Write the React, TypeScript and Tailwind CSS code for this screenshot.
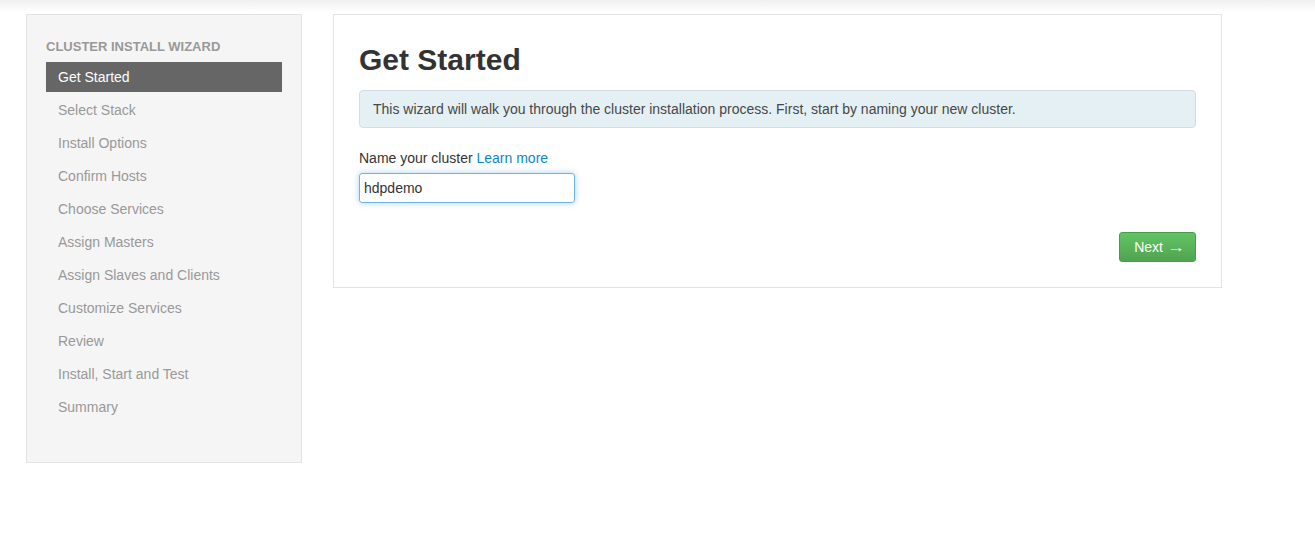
import React from "react";

const steps = [
  "Get Started",
  "Select Stack",
  "Install Options",
  "Confirm Hosts",
  "Choose Services",
  "Assign Masters",
  "Assign Slaves and Clients",
  "Customize Services",
  "Review",
  "Install, Start and Test",
  "Summary",
];

export default function App() {
  return (
    <div
      className="min-h-[545px] w-full bg-[linear-gradient(to_bottom,#f0f0f0_0px,#ffffff_12px)] pl-[26px] pt-[14px] text-[14px] text-[#333]"
      style={{ fontFamily: '"Liberation Sans", Arial, Helvetica, sans-serif' }}
    >
      <div className="flex items-start gap-[31px]">
        <div className="w-[276px] h-[449px] shrink-0 border border-[#e3e3e3] bg-[#f5f5f5] px-[19px] pt-[22px]">
          <div className="text-[13px] leading-[20px] font-bold uppercase text-[#999]">Cluster Install Wizard</div>
          <ul className="mt-[5px] flex flex-col gap-[3px]">
            {steps.map((s, i) => (
              <li
                key={s}
                className={
                  i === 0
                    ? "h-[30px] leading-[30px] pl-[12px] bg-[#666] text-white"
                    : "h-[30px] leading-[30px] pl-[12px] text-[#999]"
                }
              >
                {s}
              </li>
            ))}
          </ul>
        </div>
        <div className="w-[889px] h-[274px] shrink-0 border border-[#e3e3e3] bg-white px-[25px] pt-[25px]">
          <h1 className="text-[30px] leading-[40px] font-bold text-[#333]">Get Started</h1>
          <div className="mt-[10px] h-[38px] flex items-center rounded-[4px] border border-[#cfdee6] bg-[#e5f0f5] px-[13px] text-[#474747]">
            This wizard will walk you through the cluster installation process. First, start by naming your new cluster.
          </div>
          <div className="mt-[20px] leading-[20px]">
            Name your cluster <a className="text-[#0a88cc]">Learn more</a>
          </div>
          <input
            defaultValue="hdpdemo"
            className="mt-[5px] block h-[30px] w-[216px] rounded-[3px] border border-[#6eb3ea] px-[4px] text-[14px] text-[#333] outline-none shadow-[0_0_6px_rgba(102,175,233,0.55)]"
            style={{ fontFamily: '"Liberation Sans", Arial, sans-serif' }}
          />
          <div className="mt-[29px] flex justify-end">
            <button className="h-[30px] w-[77px] rounded-[3px] border border-[#4a9d4a] bg-[linear-gradient(to_bottom,#62c462,#51a351)] text-[14px] text-white">
              Next <span className="inline-block scale-x-[1.3] origin-left">→</span>
            </button>
          </div>
        </div>
      </div>
    </div>
  );
}
